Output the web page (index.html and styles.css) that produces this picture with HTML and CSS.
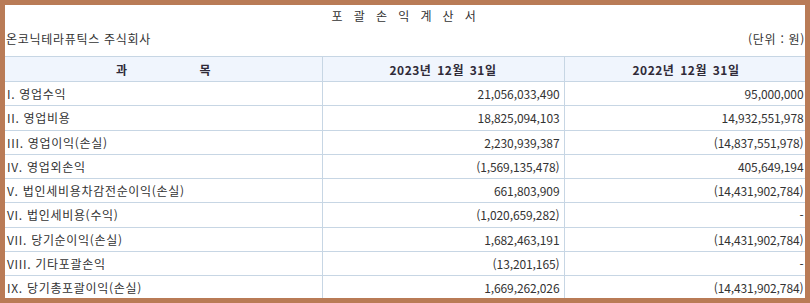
FILE: index.html
```html
<!DOCTYPE html>
<html lang="ko">
<head>
<meta charset="utf-8">
<title>포괄손익계산서</title>
<link rel="stylesheet" href="styles.css">
</head>
<body>
<div class="frame">
  <div class="title">포 괄 손 익 계 산 서</div>
  <div class="meta">
    <span class="company">온코닉테라퓨틱스 주식회사</span>
    <span class="unit">(단위 : 원)</span>
  </div>
  <table class="stmt">
    <colgroup>
      <col class="c1"><col class="c2"><col class="c3">
    </colgroup>
    <thead>
      <tr>
        <th class="subject">과 목</th>
        <th class="period">2023년 12월 31일</th>
        <th class="period">2022년 12월 31일</th>
      </tr>
    </thead>
    <tbody>
      <tr><td class="label">I. 영업수익</td><td class="num">21,056,033,490</td><td class="num">95,000,000</td></tr>
      <tr><td class="label">II. 영업비용</td><td class="num">18,825,094,103</td><td class="num">14,932,551,978</td></tr>
      <tr><td class="label">III. 영업이익(손실)</td><td class="num">2,230,939,387</td><td class="num">(14,837,551,978)</td></tr>
      <tr><td class="label">IV. 영업외손익</td><td class="num">(1,569,135,478)</td><td class="num">405,649,194</td></tr>
      <tr><td class="label">V. 법인세비용차감전순이익(손실)</td><td class="num">661,803,909</td><td class="num">(14,431,902,784)</td></tr>
      <tr><td class="label">VI. 법인세비용(수익)</td><td class="num">(1,020,659,282)</td><td class="num">-</td></tr>
      <tr><td class="label">VII. 당기순이익(손실)</td><td class="num">1,682,463,191</td><td class="num">(14,431,902,784)</td></tr>
      <tr><td class="label">VIII. 기타포괄손익</td><td class="num">(13,201,165)</td><td class="num">-</td></tr>
      <tr><td class="label">IX. 당기총포괄이익(손실)</td><td class="num">1,669,262,026</td><td class="num">(14,431,902,784)</td></tr>
    </tbody>
  </table>
</div>
</body>
</html>
```
FILE: styles.css
```css
html, body {
  margin: 0;
  padding: 0;
  background: #ffffff;
}
body {
  font-family: "Noto Sans CJK KR", "Noto Sans", sans-serif;
  font-size: 12px;
  color: #333333;
}
.frame {
  width: 800px;
  height: 293px;
  border: 5px solid #b97b56;
  overflow: hidden;
  background: #ffffff;
}
.title {
  margin-top: 3px;
  line-height: 16px;
  text-align: center;
  letter-spacing: 2.6px;
  word-spacing: 2.6px;
}
.meta {
  margin-top: 7px;
  line-height: 16px;
  display: flex;
  justify-content: space-between;
  padding-left: 1px;
  letter-spacing: 0.7px;
}
.stmt {
  margin-top: 9px;
  width: 803px;
  border-collapse: collapse;
  table-layout: fixed;
}
.c1 { width: 317px; }
.c2 { width: 242px; }
.c3 { width: 244px; }
.stmt th,
.stmt td {
  border: 1px solid #c7d6e4;
  padding: 0 2px;
  white-space: nowrap;
}
.stmt tr > :first-child {
  border-left: none;
}
.stmt th {
  height: 24px;
  background: #f0f5fd;
  font-weight: bold;
  color: #2f2a38;
  text-align: center;
}
.stmt th.subject {
  word-spacing: 69px;
}
.stmt th.period {
  letter-spacing: 0.5px;
  word-spacing: 2px;
}
.stmt td {
  height: 23.25px;
}
.stmt td.label {
  letter-spacing: 0.7px;
}
.stmt td.num {
  text-align: right;
  padding-right: 4px;
  letter-spacing: -0.1px;
}
```
